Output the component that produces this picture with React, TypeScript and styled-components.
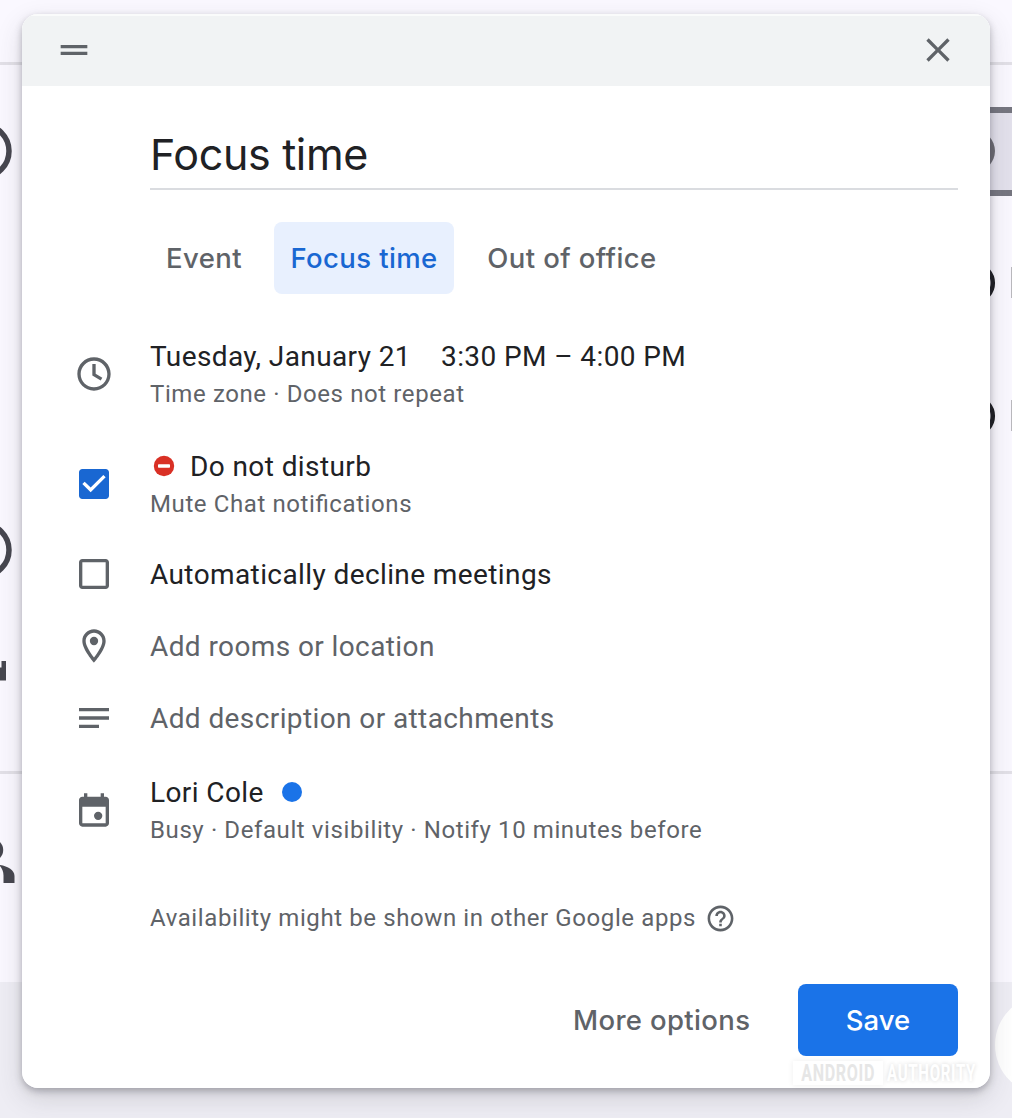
import React from 'react';
import styled, { createGlobalStyle, css } from 'styled-components';

const GlobalStyle = createGlobalStyle`
  * { box-sizing: border-box; }
  body { margin: 0; background: #faf8ff; overflow: hidden; }
  svg { display: block; flex: none; }
`;

const display = css`font-family: Inter, "Liberation Sans", sans-serif;`;

const Page = styled.div`
  position: relative;
  width: 1012px;
  height: 1118px;
  overflow: hidden;
  display: flex;
  flex-direction: column;
  background: #faf8ff;
  font-family: Roboto, "Liberation Sans", sans-serif;
`;
const BackHeader = styled.div`
  height: 65px;
  border-bottom: 3px solid #e2e0e7;
`;
const BackSection = styled.div<{ $height: number; $line?: boolean }>`
  height: ${p => p.$height}px;
  display: flex;
  justify-content: space-between;
  border-bottom: ${p => (p.$line ? '3px solid #e2e0e7' : 'none')};
`;
const BackFooter = styled.div`
  flex: 1;
  display: flex;
  justify-content: flex-end;
  background: #eeedf4;
`;
const Rail = styled.div`
  width: 22px;
  display: flex;
  flex-direction: column;
`;
const SelectedField = styled.div`
  height: 89px;
  margin-top: 42px;
  border: solid #767680;
  border-width: 6px 0;
  background: #e3e1ec;
`;
const BackIcon = styled.svg<{ $top?: number }>`
  margin-top: ${p => p.$top ?? 0}px;
`;

const Dialog = styled.section`
  position: absolute;
  left: 22px;
  top: 14px;
  width: 968px;
  height: 1074px;
  border-radius: 16px;
  background: #fff;
  overflow: hidden;
  display: flex;
  flex-direction: column;
`;
const DialogShadow = styled.div`
  position: absolute;
  left: 22px;
  top: 14px;
  width: 968px;
  height: 1074px;
  border-radius: 16px;
  box-shadow: 0 3px 7px rgba(60, 60, 67, 0.34), 0 10px 26px rgba(60, 60, 67, 0.17);
`;
const DialogHeader = styled.header`
  height: 72px;
  padding: 0 32px 2px;
  border-top: 2px solid #fafbfb;
  background: #f1f3f4;
  display: flex;
  align-items: center;
  justify-content: space-between;
`;
const Content = styled.div`
  flex: 1;
  padding: 34px 32px 32px 128px;
  display: flex;
  flex-direction: column;
`;
const Title = styled.h1`
  ${display}
  margin: 0;
  height: 70px;
  line-height: 68px;
  border-bottom: 2px solid #dadce0;
  font-size: 43px;
  font-weight: 370;
  letter-spacing: -0.35px;
  color: #202124;
`;
const Tabs = styled.nav`
  display: flex;
  gap: 16px;
  margin-top: 32px;
  margin-bottom: 43px;
`;
const Tab = styled.button<{ $active?: boolean; $width: number }>`
  ${display}
  width: ${p => p.$width}px;
  height: 72px;
  padding: 0;
  border: 0;
  border-radius: 8px;
  background: ${p => (p.$active ? '#e8f0fe' : 'transparent')};
  color: ${p => (p.$active ? '#1967d2' : '#5f6368')};
  font-size: 27.5px;
  font-weight: 500;
  letter-spacing: 0.4px;
  white-space: nowrap;
`;
const Row = styled.div<{ $tall?: boolean; $after?: number }>`
  height: ${p => (p.$tall ? 74 : 72)}px;
  margin-left: -76px;
  margin-bottom: ${p => p.$after ?? 0}px;
  display: flex;
  align-items: center;
  gap: 36px;
  > svg { margin-bottom: ${p => (p.$tall ? 0 : 2)}px; }
`;
const RowText = styled.div`
  display: flex;
  flex-direction: column;
`;
const Primary = styled.div<{ $muted?: boolean; $gap?: number }>`
  height: 40px;
  display: flex;
  align-items: center;
  gap: ${p => p.$gap ?? 0}px;
  line-height: 40px;
  font-size: 28px;
  letter-spacing: 0.4px;
  white-space: nowrap;
  color: ${p => (p.$muted ? '#5f6368' : '#202124')};
`;
const Secondary = styled.div`
  height: 34px;
  line-height: 34px;
  font-size: 24px;
  letter-spacing: 0.6px;
  font-feature-settings: "liga" 1;
  white-space: nowrap;
  color: #5f6368;
`;
const ColorDot = styled.span`
  width: 20px;
  height: 20px;
  margin-bottom: 2px;
  border-radius: 50%;
  background: #1a73e8;
`;
const Note = styled.div`
  display: flex;
  align-items: center;
  gap: 9px;
  margin-top: 54px;
`;
const Actions = styled.footer`
  display: flex;
  justify-content: flex-end;
  margin-top: 49px;
`;
const Button = styled.button<{ $primary?: boolean }>`
  ${display}
  width: ${p => (p.$primary ? 160 : 225)}px;
  height: 72px;
  padding: 0 ${p => (p.$primary ? 0 : 49)}px 0 0;
  border: 0;
  border-radius: 8px;
  background: ${p => (p.$primary ? '#1a73e8' : 'transparent')};
  color: ${p => (p.$primary ? '#fff' : '#5f6368')};
  font-size: 27.5px;
  font-weight: 500;
  letter-spacing: ${p => (p.$primary ? 0 : 0.35)}px;
  white-space: nowrap;
`;
const Watermark = styled.div`
  position: absolute;
  left: 793px;
  top: 1061px;
  display: flex;
  gap: 4px;
  height: 24px;
  line-height: 25px;
  font-size: 24px;
  font-weight: 700;
  text-align: center;
`;
const Mark = styled.span<{ $boxed?: boolean }>`
  width: 90px;
  height: 24px;
  display: flex;
  justify-content: center;
  background: ${p => (p.$boxed ? '#fff' : 'transparent')};
  color: ${p => (p.$boxed ? '#e6e6e6' : '#fff')};
  box-shadow: ${p => (p.$boxed ? '0 0 6px rgba(0,0,0,0.07)' : 'none')};
  text-shadow: ${p => (p.$boxed ? 'none' : '0 0 6px rgba(0,0,0,0.16)')};
`;
const Narrow = styled.span<{ $scale: number }>`
  display: block;
  letter-spacing: 1px;
  transform: scaleX(${p => p.$scale});
`;

const Glyph = ({ d, size = 40, color = '#5f6368' }: { d: string; size?: number; color?: string }) => (
  <svg width={size} height={size} viewBox="0 0 24 24" fill={color}><path d={d} /></svg>
);

const icons = {
  drag: 'M20 9H4v2h16V9zM4 15h16v-2H4v2z',
  close: 'M19 6.41 17.59 5 12 10.59 6.41 5 5 6.41 10.59 12 5 17.59 6.41 19 12 13.41 17.59 19 19 17.59 13.41 12z',
  clock: 'M11.99 2C6.47 2 2 6.48 2 12s4.47 10 9.99 10C17.52 22 22 17.52 22 12S17.52 2 11.99 2zM12 20c-4.42 0-8-3.58-8-8s3.58-8 8-8 8 3.58 8 8-3.58 8-8 8zM11 6h2v5.8l4 2.4-1 1.65-5-3z',
  checked: 'M19 3H5c-1.11 0-2 .9-2 2v14c0 1.1.89 2 2 2h14c1.11 0 2-.9 2-2V5c0-1.1-.89-2-2-2zm-9 14-5-5 1.41-1.41L10 14.17l7.59-7.59L19 8l-9 9z',
  unchecked: 'M19 5v14H5V5h14m0-2H5c-1.1 0-2 .9-2 2v14c0 1.1.9 2 2 2h14c1.1 0 2-.9 2-2V5c0-1.1-.9-2-2-2z',
  place: 'M12 2C8.13 2 5 5.13 5 9c0 5.25 7 13 7 13s7-7.75 7-13c0-3.87-3.13-7-7-7zM7 9c0-2.76 2.24-5 5-5s5 2.24 5 5c0 2.88-2.88 7.19-5 9.88C9.92 16.21 7 11.85 7 9zM12 6.5a2.5 2.5 0 1 0 0 5 2.5 2.5 0 0 0 0-5z',
  notes: 'M3 18h12v-2H3v2zM3 6v2h18V6H3zm0 7h18v-2H3v2z',
  calendar: 'M19 4h-1V2h-2v2H8V2H6v2H5c-1.1 0-2 .9-2 2v14c0 1.1.9 2 2 2h14c1.1 0 2-.9 2-2V6c0-1.1-.9-2-2-2zm0 16H5V10h14v10zM14.5 13a2.5 2.5 0 1 0 0 5 2.5 2.5 0 0 0 0-5z',
  help: 'M11 18h2v-2h-2v2zm1-16C6.48 2 2 6.48 2 12s4.48 10 10 10 10-4.48 10-10S17.52 2 12 2zm0 18c-4.41 0-8-3.59-8-8s3.59-8 8-8 8 3.59 8 8-3.59 8-8 8zm0-14c-2.21 0-4 1.79-4 4h2c0-1.1.9-2 2-2s2 .9 2 2c0 2-3 1.75-3 5h2c0-2.25 3-2.5 3-5 0-2.21-1.79-4-4-4z',
};

const LeftRing = ({ top }: { top: number }) => (
  <BackIcon $top={top} width="22" height="60" viewBox="0 0 22 60">
    <circle cx="-17" cy="29" r="26" fill="none" stroke="#46464f" strokeWidth="5.5" />
  </BackIcon>
);
const RightRing = ({ top }: { top: number }) => (
  <BackIcon $top={top} width="22" height="44" viewBox="0 0 22 44">
    <circle cx="-15.5" cy="21" r="18.3" fill="none" stroke="#1b1b20" strokeWidth="4.5" />
    <path d="M21 5h1v31h-1z" fill="#b9b8bd" />
  </BackIcon>
);

export default function App() {
  return (
    <Page>
      <GlobalStyle />
      <BackHeader />
      <BackSection $height={709} $line>
        <Rail>
          <LeftRing top={57} />
          <LeftRing top={339} />
          <BackIcon $top={80} width="22" height="20" viewBox="0 0 22 20">
            <path d="M1.500 0H6v19.500H0V6.500h1.500z" fill="#46464f" />
          </BackIcon>
        </Rail>
        <Rail>
          <SelectedField>
            <BackIcon $top={17} width="22" height="42" viewBox="0 0 22 42">
              <circle cx="-15.500" cy="21" r="20.500" fill="#6b6a72" />
            </BackIcon>
          </SelectedField>
          <RightRing top={66} />
          <RightRing top={89} />
        </Rail>
      </BackSection>
      <BackSection $height={208}>
        <Rail>
          <BackIcon $top={66} width="22" height="44" viewBox="0 0 22 44" fill="#46464f">
            <path d="M0 2C2.200 4.500 3.200 7 3.200 10S2.200 15.500 0 18z" />
            <path d="M0 25c8 1.300 14.500 5 14.500 11V43H3.500v-7.500C3.500 31.500 2 28.500 0 26z" />
          </BackIcon>
        </Rail>
      </BackSection>
      <BackFooter>
        <BackIcon $top={10} width="22" height="104" viewBox="0 0 22 104">
          <circle cx="55" cy="53" r="50" fill="#ffffff" />
        </BackIcon>
      </BackFooter>

      <DialogShadow />
      <Dialog>
        <DialogHeader>
          <Glyph d={icons.drag} />
          <Glyph d={icons.close} />
        </DialogHeader>
        <Content>
          <Title>Focus time</Title>
          <Tabs>
            <Tab $width={108}>Event</Tab>
            <Tab $width={180} $active>Focus time</Tab>
            <Tab $width={204}>Out of office</Tab>
          </Tabs>
          <Row $tall $after={36}>
            <Glyph d={icons.clock} />
            <RowText>
              <Primary $gap={30}><span>Tuesday, January 21</span><span>3:30 PM – 4:00 PM</span></Primary>
              <Secondary>Time zone · Does not repeat</Secondary>
            </RowText>
          </Row>
          <Row $tall $after={18}>
            <Glyph d={icons.checked} color="#1967d2" />
            <RowText>
              <Primary $gap={12}>
                <svg width="28" height="28" viewBox="0 0 28 28">
                  <circle cx="14" cy="13" r="10.200" fill="#d93025" />
                  <rect x="8" y="11.200" width="12" height="3.500" rx="0.800" fill="#fff" />
                </svg>
                <span>Do not disturb</span>
              </Primary>
              <Secondary>Mute Chat notifications</Secondary>
            </RowText>
          </Row>
          <Row>
            <Glyph d={icons.unchecked} />
            <Primary>Automatically decline meetings</Primary>
          </Row>
          <Row>
            <Glyph d={icons.place} />
            <Primary $muted>Add rooms or location</Primary>
          </Row>
          <Row $after={18}>
            <Glyph d={icons.notes} />
            <Primary $muted>Add description or attachments</Primary>
          </Row>
          <Row $tall>
            <Glyph d={icons.calendar} />
            <RowText>
              <Primary $gap={18}><span>Lori Cole</span><ColorDot /></Primary>
              <Secondary>Busy · Default visibility · Notify 10 minutes before</Secondary>
            </RowText>
          </Row>
          <Note>
            <Secondary>Availability might be shown in other Google apps</Secondary>
            <Glyph d={icons.help} size={31} />
          </Note>
          <Actions>
            <Button>More options</Button>
            <Button $primary>Save</Button>
          </Actions>
        </Content>
      </Dialog>
      <Watermark>
        <Mark $boxed><Narrow $scale={0.67}>ANDROID</Narrow></Mark>
        <Mark><Narrow $scale={0.63}>AUTHORITY</Narrow></Mark>
      </Watermark>
    </Page>
  );
}
